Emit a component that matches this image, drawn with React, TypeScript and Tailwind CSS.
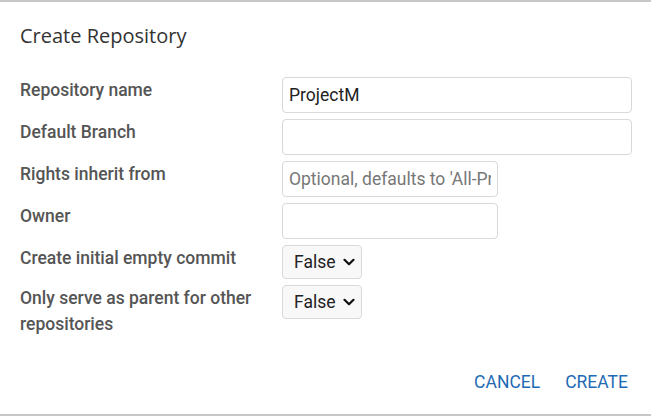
import { useState } from 'react';

const labelCls = 'w-[262px] shrink-0 pr-3 text-[17.5px] leading-[26px] font-medium text-[#555555]';
const inputCls =
    'h-9 rounded-[4px] border border-[#d9d9d9] bg-white px-[6px] text-[17.5px] text-[#222] outline-none placeholder:text-[#777]';

const Chevron = () => (
    <svg width="12" height="8" viewBox="0 0 12 8" className="shrink-0">
        <path d="M1.5 1.8 6 6.2 10.5 1.8" fill="none" stroke="#111" strokeWidth="2.2" strokeLinecap="round" strokeLinejoin="round" />
    </svg>
);

const FakeSelect = ({ value }: { value: string }) => (
    <div className="flex h-[34px] w-20 items-center justify-between rounded-[4px] border border-[#d9d9d9] bg-[#f8f8f8] pl-[11px] pr-[6px] text-[17.5px] text-[#222]">
        <span>{value}</span>
        <Chevron />
    </div>
);

export default function App() {
    const [name, setName] = useState('ProjectM');

    return (
        <div className="h-[416px] w-[651px] overflow-hidden bg-[#c8c8c8] pt-[2px] pb-[2px] font-['Roboto',sans-serif]">
            <div className="flex h-full flex-col bg-white">
                {/* Title */}
                <h1 className="px-5 pt-[20px] font-['Open_Sans',sans-serif] text-[20px] leading-[28px] text-[#333]">
                    Create Repository
                </h1>

                {/* Form */}
                <div className="mt-[27px] flex flex-col gap-[6px] pl-5">
                    <div className="flex items-start">
                        <div className={labelCls}>Repository name</div>
                        <input className={`${inputCls} w-[350px]`} value={name} onChange={e => setName(e.target.value)} />
                    </div>
                    <div className="flex items-start">
                        <div className={labelCls}>Default Branch</div>
                        <input className={`${inputCls} w-[350px]`} />
                    </div>
                    <div className="flex items-start">
                        <div className={labelCls}>Rights inherit from</div>
                        <input className={`${inputCls} w-[216px]`} placeholder="Optional, defaults to 'All-Projects'" />
                    </div>
                    <div className="flex items-start">
                        <div className={labelCls}>Owner</div>
                        <input className={`${inputCls} w-[216px]`} />
                    </div>
                    <div className="flex items-start">
                        <div className={labelCls}>Create initial empty commit</div>
                        <FakeSelect value="False" />
                    </div>
                    <div className="flex items-start">
                        <div className={labelCls}>Only serve as parent for other repositories</div>
                        <FakeSelect value="False" />
                    </div>
                </div>

                {/* Actions */}
                <div className="mt-auto flex justify-end gap-[9px] pr-[15px] pb-[16px]">
                    <button className="px-2 py-1 text-[17.5px] leading-[24px] text-[#1f6bb5]">CANCEL</button>
                    <button className="px-2 py-1 text-[17.5px] leading-[24px] text-[#1f6bb5]">CREATE</button>
                </div>
            </div>
        </div>
    );
}
